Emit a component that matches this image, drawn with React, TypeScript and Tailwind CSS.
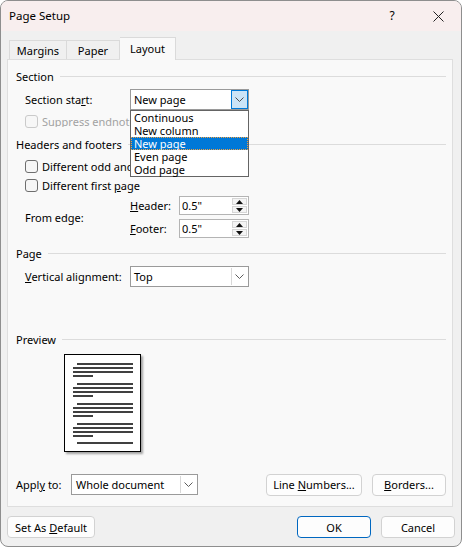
import React from "react";

const font = { fontFamily: '"Noto Sans", "Open Sans", sans-serif' };

function Chevron({ color = "#5c5c5c" }: { color?: string }) {
  return (
    <svg width="9" height="5" viewBox="0 0 9 5" fill="none">
      <path d="M0.5 0.5 L4.5 4.5 L8.5 0.5" stroke={color} strokeWidth="1" />
    </svg>
  );
}

function Heading({ text }: { text: string }) {
  return (
    <div className="flex items-center h-[16px] gap-[6px]">
      <span className="whitespace-nowrap">{text}</span>
      <div className="flex-1 h-px bg-[#dcdcdc]" />
    </div>
  );
}

// labels under the open list are clipped where the list starts (x=130)
function Check({ label, disabled, clip }: { label: React.ReactNode; disabled?: boolean; clip?: boolean }) {
  return (
    <div className="flex items-center h-[14px] pl-[9px] gap-[4px]">
      <div
        className={`w-[13px] h-[13px] shrink-0 rounded-[3px] border ${
          disabled ? "border-[#cacaca] bg-[#f7f7f7]" : "border-[#6e6e6e] bg-[#f6f6f6]"
        }`}
      />
      <span
        className={`whitespace-nowrap ${clip ? "w-[88px] overflow-hidden" : ""} ${
          disabled ? "text-[#a2a2a2]" : ""
        }`}
      >
        {label}
      </span>
    </div>
  );
}

function Spin() {
  return (
    <div className="absolute right-[1px] top-[1px] bottom-[1px] w-[15px] flex flex-col gap-px">
      <div className="flex-1 flex items-center justify-center bg-[#f4f4f4] border border-[#d6d6d6]">
        <svg width="7" height="4" viewBox="0 0 7 4"><path d="M3.5 0 L7 4 L0 4 Z" fill="#111" /></svg>
      </div>
      <div className="flex-1 flex items-center justify-center bg-[#f4f4f4] border border-[#d6d6d6]">
        <svg width="7" height="4" viewBox="0 0 7 4"><path d="M0 0 L7 0 L3.5 4 Z" fill="#111" /></svg>
      </div>
    </div>
  );
}

function Btn({ children, w, primary }: { children: React.ReactNode; w: string; primary?: boolean }) {
  return (
    <div
      className={`${w} h-[22px] flex items-center justify-center rounded-[4px] bg-[#fdfdfd] border ${
        primary ? "border-[#0067c0]" : "border-[#d2d2d2]"
      }`}
    >
      <span className="whitespace-nowrap">{children}</span>
    </div>
  );
}

const OPTIONS = ["Continuous", "New column", "New page", "Even page", "Odd page"];

function Preview() {
  const groups = [9, 29, 49, 69];
  return (
    <div className="ml-[48px] w-[77px] h-[98px] bg-white border border-black shadow-[2px_2px_2px_rgba(0,0,0,0.35)]">
      <svg width="75" height="96" viewBox="0 0 75 96">
        {groups.map((y) => (
          <g key={y} stroke="#000" strokeWidth="1.5">
            <line x1="12" y1={y} x2="68" y2={y} />
            <line x1="8" y1={y + 4} x2="68" y2={y + 4} />
            <line x1="8" y1={y + 8} x2="68" y2={y + 8} />
            <line x1="8" y1={y + 12} x2="28" y2={y + 12} />
          </g>
        ))}
        <line x1="12" y1="88" x2="68" y2="88" stroke="#000" strokeWidth="1.5" />
      </svg>
    </div>
  );
}

export default function App() {
  return (
    <div className="w-[462px] h-[547px] bg-white text-[11px] text-black leading-none" style={font}>
      <div className="w-[462px] h-[547px] rounded-[8px] border border-[#8e8e8e] bg-[#f0f0f0] overflow-hidden flex flex-col">
        {/* title bar */}
        <div className="h-[30px] bg-[#f8eeee] flex items-center pl-[8px]">
          <span className="flex-1 text-[11.5px]">Page Setup</span>
          <div className="w-[46px] flex justify-center text-[12px]">?</div>
          <div className="w-[46px] flex justify-center">
            <svg width="11" height="11" viewBox="0 0 11 11">
              <path d="M0.5 0.5 L10.5 10.5 M10.5 0.5 L0.5 10.5" stroke="#222" strokeWidth="1" />
            </svg>
          </div>
        </div>

        {/* tabs */}
        <div className="mt-[6px] pl-[8px] flex items-end h-[22px]">
          <div className="w-[58px] h-[19px] flex items-center justify-center border border-b-0 border-[#dadada] bg-[#f0f0f0]">
            Margins
          </div>
          <div className="w-[53px] h-[19px] flex items-center justify-center border border-l-0 border-b-0 border-[#dadada] bg-[#f0f0f0]">
            Paper
          </div>
          <div className="relative z-10 -mb-px w-[56px] h-[23px] flex items-start pt-[5px] justify-center border border-l-0 border-b-0 border-[#dadada] bg-[#f9f9f9]">
            Layout
          </div>
        </div>

        {/* panel */}
        <div className="ml-[6px] w-[446px] h-[448px] border border-[#dedede] bg-[#f9f9f9] pl-[8px] pr-[6px] flex flex-col">
          <div className="mt-[8px]">
            <Heading text="Section" />
          </div>

          <div className="mt-[5px] h-[21px] flex items-center">
            <div className="w-[114px] pl-[9px] whitespace-nowrap">
              Section sta<span className="underline">r</span>t:
            </div>
            <div className="relative w-[119px] h-[21px] bg-white border border-[#9a9a9a] flex items-center pl-[3px]">
              New page
              <div className="absolute right-[0px] top-[0px] bottom-[0px] w-[17px] bg-[#cce4f7] border border-[#0078d7] flex items-center justify-center">
                <Chevron color="#4d4d4d" />
              </div>
              <div className="absolute left-[-1px] top-[20px] w-[119px] z-20 bg-white border border-[#646464]">
                {OPTIONS.map((o) => (
                  <div
                    key={o}
                    className={`h-[13px] leading-[11px] pl-[2px] whitespace-nowrap ${
                      o === "New page"
                        ? "bg-[#0078d7] text-white border border-dotted border-[#f0a040]"
                        : "border border-transparent"
                    }`}
                  >
                    {o}
                  </div>
                ))}
              </div>
            </div>
          </div>

          <div className="mt-[4px]">
            <Check disabled clip label="Suppress endnotes" />
          </div>

          <div className="mt-[8px]">
            <Heading text="Headers and footers" />
          </div>
          <div className="mt-[7px]">
            <Check
              clip
              label={
                <>
                  Different <span className="underline">o</span>dd and even
                </>
              }
            />
          </div>
          <div className="mt-[5px]">
            <Check
              label={
                <>
                  Different first <span className="underline">p</span>age
                </>
              }
            />
          </div>

          <div className="mt-[4px] h-[42px] flex items-center">
            <div className="w-[114px] pl-[9px]">From edge:</div>
            <div className="flex flex-col gap-[4px]">
              {[
                ["H", "eader:"],
                ["F", "ooter:"],
              ].map(([k, rest]) => (
                <div key={k} className="flex items-center h-[19px]">
                  <div className="w-[49px]">
                    <span className="underline">{k}</span>
                    {rest}
                  </div>
                  <div className="relative w-[70px] h-[19px] bg-white border border-[#b4b4b4] flex items-center pl-[2px]">
                    0.5"
                    <Spin />
                  </div>
                </div>
              ))}
            </div>
          </div>

          <div className="mt-[7px]">
            <Heading text="Page" />
          </div>
          <div className="mt-[5px] h-[21px] flex items-center">
            <div className="w-[114px] pl-[9px] whitespace-nowrap">
              <span className="underline">V</span>ertical alignment:
            </div>
            <div className="relative w-[119px] h-[21px] bg-white border border-[#9a9a9a] flex items-center pl-[3px]">
              Top
              <div className="absolute right-[1px] top-[1px] bottom-[1px] w-[16px] border-l border-[#d8d8d8] flex items-center justify-center">
                <Chevron />
              </div>
            </div>
          </div>

          <div className="mt-[44px]">
            <Heading text="Preview" />
          </div>
          <div className="mt-[7px]">
            <Preview />
          </div>

          <div className="mt-[22px] h-[21px] flex items-center">
            <div className="w-[55px] whitespace-nowrap">
              Appl<span className="underline">y</span> to:
            </div>
            <div className="relative w-[127px] h-[21px] bg-white border border-[#9a9a9a] flex items-center pl-[4px]">
              Whole document
              <div className="absolute right-[1px] top-[1px] bottom-[1px] w-[16px] border-l border-[#d8d8d8] flex items-center justify-center">
                <Chevron />
              </div>
            </div>
            <div className="ml-auto flex gap-[10px]">
              <Btn w="w-[96px]">
                Line <span className="underline">N</span>umbers...
              </Btn>
              <Btn w="w-[74px]">
                <span className="underline">B</span>orders...
              </Btn>
            </div>
          </div>
        </div>

        {/* footer */}
        <div className="mt-[9px] px-[6px] flex items-center">
          <Btn w="w-[88px]">
            Set As <span className="underline">D</span>efault
          </Btn>
          <div className="ml-auto flex gap-[10px]">
            <Btn w="w-[74px]" primary>
              OK
            </Btn>
            <Btn w="w-[74px]">Cancel</Btn>
          </div>
        </div>
      </div>
    </div>
  );
}
